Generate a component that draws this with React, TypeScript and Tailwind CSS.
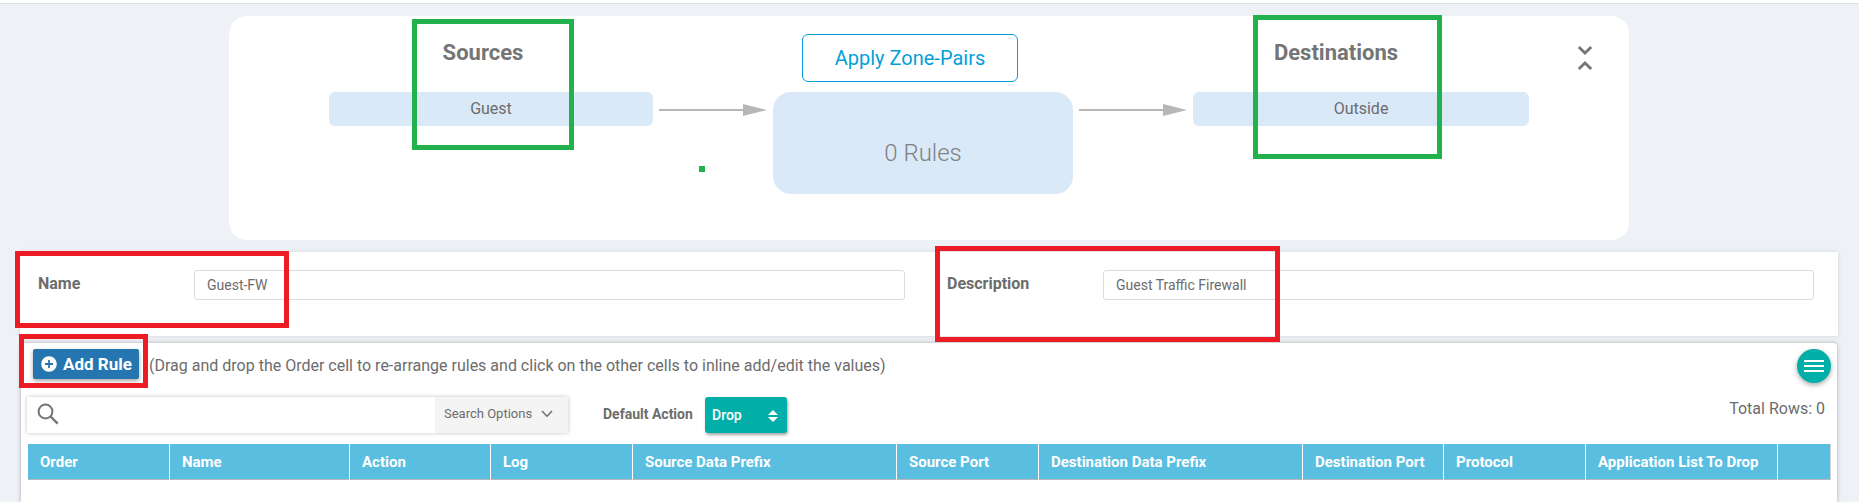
import React from "react";

const columns = [
  { label: "Order", width: "w-[142px]" },
  { label: "Name", width: "w-[180px]" },
  { label: "Action", width: "w-[141px]" },
  { label: "Log", width: "w-[142px]" },
  { label: "Source Data Prefix", width: "w-[264px]" },
  { label: "Source Port", width: "w-[142px]" },
  { label: "Destination Data Prefix", width: "w-[264px]" },
  { label: "Destination Port", width: "w-[141px]" },
  { label: "Protocol", width: "w-[142px]" },
  { label: "Application List To Drop", width: "w-[192px]" },
  { label: "", width: "w-[53px]" },
];

function Arrow() {
  return (
    <svg viewBox="0 0 108 12" className="mx-auto mt-3 h-3 w-[108px]" aria-hidden="true">
      <path d="M0 5h85v2H0z" fill="#b7b7b7" />
      <path d="M84 0l24 6-24 6z" fill="#b7b7b7" />
    </svg>
  );
}

function Marker({ className }: { className: string }) {
  return <span aria-hidden="true" className={`pointer-events-none absolute z-10 ${className}`} />;
}

function ZoneDiagram() {
  return (
    <section className="relative mx-auto grid min-h-[224px] max-w-[1400px] grid-cols-[100px_324fr_120px_300px_120px_336fr_100px] grid-rows-[76px_auto] rounded-[18px] bg-white">
      <h2 className="col-start-2 pt-[23px] pr-4 text-center text-[22px] leading-7 font-bold text-[#757575]">
        Sources
      </h2>
      <div className="col-start-4 flex items-start justify-center pt-[18px] pr-[26px]">
        <button
          type="button"
          className="h-12 w-[216px] rounded-md border border-[#049fd9] text-xl text-[#049fd9]"
        >
          Apply Zone-Pairs
        </button>
      </div>
      <h2 className="col-start-6 pt-[23px] pr-[50px] text-center text-[22px] leading-7 font-bold text-[#757575]">
        Destinations
      </h2>
      <div className="col-start-7 flex items-start justify-center pt-7 pl-3">
        <button type="button" aria-label="Collapse diagram" className="p-0">
          <svg viewBox="0 0 16 28" className="h-7 w-4" fill="none" stroke="#757575" strokeWidth="2.8">
            <path d="M1.8 3l6.2 6 6.2-6M1.8 25l6.2-6 6.2 6" />
          </svg>
        </button>
      </div>

      <div className="relative col-start-2 flex h-[34px] items-center justify-center rounded-md bg-[#dae9f8] text-base text-[#6c6c6c]">
        Guest
        <Marker className="top-[-73px] left-[83px] h-[131px] w-[162px] border-5 border-[#22b14c]" />
      </div>
      <div className="relative">
        <Arrow />
        <Marker className="top-[74px] left-[46px] size-[6px] bg-[#22b14c]" />
      </div>
      <div className="flex h-[102px] items-center justify-center rounded-[18px] bg-[#dae9f8] pt-5 text-2xl font-light text-[#808080]">
        0 Rules
      </div>
      <Arrow />
      <div className="relative flex h-[34px] items-center justify-center rounded-md bg-[#dae9f8] text-base text-[#6c6c6c]">
        Outside
        <Marker className="top-[-77px] left-[60px] h-[144px] w-[189px] border-5 border-[#22b14c]" />
      </div>
    </section>
  );
}

function Field({ id, label, value, marker }: { id: string; label: string; value: string; marker: string }) {
  return (
    <div className="relative flex items-start pt-[18px] pr-6 pl-[18px]">
      <label htmlFor={id} className="w-[156px] shrink-0 pt-1 text-base leading-5 font-bold text-[#6c6c6c]">
        {label}
      </label>
      <input
        id={id}
        type="text"
        defaultValue={value}
        className="h-[30px] min-w-0 flex-1 rounded-[3px] border border-[#dcdcdc] bg-white px-3 text-sm text-[#6c6c6c] outline-none"
      />
      <Marker className={`border-5 border-[#ed1c24] ${marker}`} />
    </div>
  );
}

function RulesPanel() {
  return (
    <section className="mr-[22px] ml-[21px] mt-1.5 flex-1 rounded-t border-t border-[#d6d6d6] bg-white px-1.5 shadow-[0_1px_4px_rgba(0,0,0,0.3)]">
      <div className="flex items-start pt-1.5 pl-1.5">
        <div className="relative">
          <button
            type="button"
            className="flex h-[30px] w-[106px] items-center gap-[6px] rounded-[2px] bg-[#2576b0] pl-2 text-[17px] leading-6 font-bold whitespace-nowrap text-white shadow-[0_2px_4px_rgba(0,0,0,0.35)]"
          >
            <svg viewBox="0 0 16 16" className="size-4" aria-hidden="true">
              <circle cx="8" cy="8" r="7.8" fill="#fff" />
              <path d="M8 4v8M4 8h8" stroke="#2576b0" strokeWidth="1.8" />
            </svg>
            Add Rule
          </button>
          <Marker className="top-[-15px] left-[-14px] h-[54px] w-[129px] border-5 border-[#ed1c24]" />
        </div>
        <p className="flex-1 pt-[5px] pl-[10px] text-base text-[#6c6c6c]">
          (Drag and drop the Order cell to re-arrange rules and click on the other cells to inline add/edit the values)
        </p>
        <button
          type="button"
          aria-label="Table menu"
          className="flex size-[34px] items-center justify-center rounded-full bg-[#02aea8] shadow-[0_2px_5px_rgba(0,0,0,0.35)]"
        >
          <svg viewBox="0 0 20 12" className="h-3 w-5" fill="#fff" aria-hidden="true">
            <path d="M0 0h20v2H0zM0 5h20v2H0zM0 10h20v2H0z" />
          </svg>
        </button>
      </div>

      <div className="flex items-start pt-3.5">
        <div className="flex h-9 w-[541px] bg-white shadow-[0_0_4px_rgba(0,0,0,0.25)]">
          <label htmlFor="search" className="flex w-10 shrink-0 items-center pb-0.5 pl-[10px]">
            <svg viewBox="0 0 22 22" className="size-[22px]" fill="none" stroke="#757575" role="img" aria-label="Search">
              <circle cx="8.5" cy="8.5" r="6.9" strokeWidth="2" />
              <path d="M13.5 13.5l7.2 7.2" strokeWidth="2.4" />
            </svg>
          </label>
          <input id="search" type="text" className="min-w-0 flex-1 text-sm outline-none" />
          <button
            type="button"
            className="flex w-[133px] items-center gap-[9px] bg-[#f4f4f4] pb-0.5 pl-[9px] text-[13px] text-[#6c6c6c]"
          >
            Search Options
            <svg viewBox="0 0 12 8" className="h-2 w-3" fill="none" stroke="#6c6c6c" strokeWidth="1.5" aria-hidden="true">
              <path d="M1 1l5 5.2L11 1" />
            </svg>
          </button>
        </div>
        <label htmlFor="action" className="ml-[35px] w-[102px] pt-[7px] text-sm font-bold text-[#6c6c6c]">
          Default Action
        </label>
        <div className="relative">
          <select
            id="action"
            className="h-9 w-[82px] appearance-none rounded-[3px] bg-[#02aea8] pl-[7px] text-sm font-medium text-white shadow-[1px_2px_3px_rgba(0,0,0,0.35)] outline-none"
            defaultValue="Drop"
          >
            <option>Drop</option>
            <option>Pass</option>
            <option>Inspect</option>
          </select>
          <svg
            viewBox="0 0 10 12"
            className="pointer-events-none absolute top-[13px] right-[9px] h-3 w-[10px]"
            fill="#fff"
            aria-hidden="true"
          >
            <path d="M5 0l5 5H0zM0 7h10l-5 5z" />
          </svg>
        </div>
        <p className="flex-1 pr-1.5 text-right text-base text-[#6c6c6c]">Total Rows: 0</p>
      </div>

      <div className="pt-[11px] pl-px">
        <table className="w-full table-fixed border-separate border-spacing-0">
          <thead>
            <tr className="h-9 bg-[#5abee0]">
              {columns.map((column) => (
                <th
                  key={column.label}
                  scope="col"
                  className={`${column.width} border-r border-b border-r-white border-b-[#b8b8b8] pl-3 text-left text-[15px] leading-5 font-bold whitespace-nowrap text-white last:border-r-[#d0d0d0]`}
                >
                  {column.label}
                </th>
              ))}
            </tr>
          </thead>
        </table>
      </div>
    </section>
  );
}

export default function App() {
  return (
    <main className="flex min-h-screen flex-col overflow-hidden bg-[#eef1f6] font-['Roboto',sans-serif]">
      <div className="h-1 border-b border-[#dcdfe3] bg-white" />
      <div className="pt-3 pr-px">
        <ZoneDiagram />
      </div>
      <form className="mr-[21px] ml-5 mt-3 grid min-h-[84px] grid-cols-2 bg-white shadow-[0_0_5px_rgba(0,0,0,0.12)]">
        <Field
          id="policy-name"
          label="Name"
          value="Guest-FW"
          marker="top-[-1px] left-[-5px] h-[77px] w-[274px]"
        />
        <Field
          id="policy-description"
          label="Description"
          value="Guest Traffic Firewall"
          marker="top-[-6px] left-[6px] h-[96px] w-[345px]"
        />
      </form>
      <RulesPanel />
    </main>
  );
}
